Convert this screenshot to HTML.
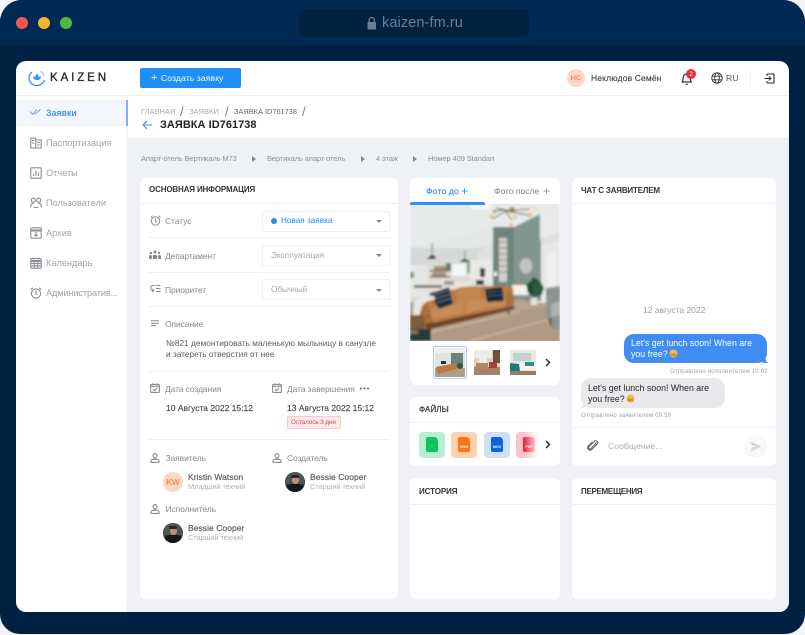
<!DOCTYPE html>
<html lang="ru"><head><meta charset="utf-8"><title>Kaizen</title>
<style>
*{box-sizing:border-box;margin:0;padding:0}
html,body{width:805px;height:635px;background:#f4f5f7;overflow:hidden;font-family:"Liberation Sans","Noto Sans CJK SC",sans-serif}
.a{position:absolute}
.t{position:absolute;white-space:nowrap;line-height:12px}
.card{position:absolute;background:#fff;border-radius:6px}
.line{position:absolute;height:1px;background:#eff0f3}
svg{position:absolute;overflow:visible}
.ic{fill:none;stroke:#8a8d93;stroke-width:1.1}
.nav{font-size:9.2px;color:#a0a3a9;letter-spacing:0}
.lab{font-size:8.5px;color:#85888e;letter-spacing:-.1px}
.sel{position:absolute;left:262px;width:128px;height:21px;border:1px solid #eeeff2;border-radius:2px;background:#fff}
.car{position:absolute;width:0;height:0;border-left:3px solid transparent;border-right:3px solid transparent;border-top:3px solid #85888e}
.head{font-size:8px;font-weight:bold;color:#33363b;letter-spacing:-.15px}
.crumb{font-size:7.5px;color:#8e9197;letter-spacing:-.1px}
.tri{position:absolute;width:0;height:0;border-top:3px solid transparent;border-bottom:3px solid transparent;border-left:4px solid #85888e}
.nm{font-size:8.5px;color:#5d6066;letter-spacing:.05px;font-weight:normal;-webkit-text-stroke:.2px #5d6066}
.rl{font-size:7.5px;color:#b0b2b7;letter-spacing:-.15px}
.ava{position:absolute;width:20px;height:20px;border-radius:50%;overflow:hidden;background:#34383b}
.file{position:absolute;top:432px;width:26px;height:26px;border-radius:4px}
.file i{position:absolute;left:7px;top:5px;width:12px;height:15px;border-radius:2px 4px 2px 2px;display:block}
.file b{position:absolute;left:0;width:26px;text-align:center;top:13px;font-size:3.5px;line-height:5px;color:#fff}
.sl{position:absolute;top:105px;font-size:13px;line-height:14px;color:#7c7f85}
</style></head><body>
<div class="a" style="left:0;top:0;width:805px;height:634px;background:#002142;border-radius:22px 22px 20px 20px;overflow:hidden">
  <div class="a" style="left:0;top:0;width:805px;height:45px;background:#002a54"></div>
</div>
<div class="a" style="left:16px;top:17px;width:12px;height:12px;border-radius:50%;background:#f0594f"></div>
<div class="a" style="left:38px;top:17px;width:12px;height:12px;border-radius:50%;background:#f7b52d"></div>
<div class="a" style="left:60px;top:17px;width:12px;height:12px;border-radius:50%;background:#4dbb3f"></div>
<div class="a" style="left:299px;top:9px;width:230px;height:28px;border-radius:6px;background:#00213f"></div>
<svg style="left:366px;top:16px" width="12" height="14" viewBox="0 0 12 14"><rect x="1.500" y="6" width="8.500" height="7.500" rx="1" fill="#6d7f92"/><path d="M3.300 6V4a2.500 2.500 0 0 1 5 0v2" fill="none" stroke="#6d7f92" stroke-width="1.300"/></svg>
<div class="t" style="left:382px;top:16px;font-size:14.5px;line-height:15px;color:#6d7f92;letter-spacing:.1px">kaizen-fm.ru</div>

<div class="a" style="left:16px;top:61px;width:773px;height:551px;background:#fff;border-radius:10px;overflow:hidden">
  <div class="a" style="left:112px;top:35px;width:661px;height:516px;background:#eff1f5"></div>
  <div class="a" style="left:112px;top:35px;width:661px;height:43px;background:#fff;border-bottom:1px solid #e8eaee"></div>
  <div class="a" style="left:0;top:34px;width:773px;height:1px;background:#eff0f3"></div>
  <div class="a" style="left:111px;top:35px;width:1px;height:516px;background:#f0f1f4"></div>
  <div class="a" style="left:0;top:39px;width:112px;height:26px;background:#f3f7fd;border-right:2px solid #7fb0ef"></div>
</div>

<!-- logo -->
<svg style="left:28px;top:69px" width="18" height="18" viewBox="0 0 18 18"><path d="M4 3A7.500 7.500 0 0 0 9 16.500a7.500 7.500 0 0 0 7.300-5.500" fill="none" stroke="#3d8ff0" stroke-width="1.300"/><path d="M12.500 2.500A7.500 7.500 0 0 1 16.300 7" fill="none" stroke="#a9cdf8" stroke-width="1.300"/><path d="M9 4.500c1.300 1.300 1.800 2.700 1.500 4l1.600-1.500.8 1c-.2 2-1.700 3-3.900 3s-3.700-1-3.900-3l.8-1 1.600 1.500C7.200 7.200 7.700 5.800 9 4.500z" fill="#3d8ff0"/></svg>
<div class="t" style="left:50px;top:71px;font-size:11.5px;line-height:15px;color:#26292e;letter-spacing:2.9px;font-weight:normal;-webkit-text-stroke:.35px #26292e">KAIZEN</div>

<!-- create -->
<div class="a" style="left:140px;top:68px;width:101px;height:20px;border-radius:2px;background:#1f8ff8"></div>
<div class="t" style="left:151px;top:72px;font-size:11px;color:#fff">+</div>
<div class="t" style="left:161px;top:72px;font-size:8.5px;color:#fff;letter-spacing:.15px">Создать заявку</div>

<!-- header right -->
<div class="a" style="left:567px;top:69px;width:18px;height:18px;border-radius:50%;background:#fdd8c2"></div>
<div class="t" style="left:567px;top:72px;width:18px;text-align:center;font-size:7.5px;color:#f4743b">НС</div>
<div class="t" style="left:591px;top:72px;color:#44474c;-webkit-text-stroke:.15px #44474c;font-size:8.5px;letter-spacing:.15px">Неклюдов Семён</div>
<svg style="left:680px;top:71px" width="14" height="15" viewBox="0 0 14 15"><path d="M2 11c1-1 1.200-2 1.200-4.300C3.200 4.300 4.800 3 6.700 3s3.500 1.300 3.500 3.700c0 2.300.2 3.300 1.300 4.300z" fill="none" stroke="#33363b" stroke-width="1.200" stroke-linejoin="round"/><path d="M5.500 12.800c.6.700 1.800.7 2.400 0" fill="none" stroke="#33363b" stroke-width="1.100"/></svg>
<div class="a" style="left:686px;top:69px;width:10px;height:10px;border-radius:50%;background:#f5263d"></div>
<div class="t" style="left:686px;top:68.5px;width:10px;text-align:center;font-size:6.5px;color:#fff">2</div>
<svg style="left:711px;top:72px" width="12" height="12" viewBox="0 0 12 12" fill="none" stroke="#2f3237" stroke-width=".9"><circle cx="6" cy="6" r="5.200"/><ellipse cx="6" cy="6" rx="2.300" ry="5.200"/><path d="M1 4.200h10M1 7.800h10"/></svg>
<div class="t" style="left:726px;top:72px;font-size:8.5px;color:#55585d;letter-spacing:.2px">RU</div>
<div class="a" style="left:750px;top:70px;width:1px;height:17px;background:#eff0f3"></div>
<svg style="left:764px;top:73px" width="11" height="11" viewBox="0 0 11 11" fill="none" stroke="#2a2d32" stroke-width="1.100"><path d="M3 1h7v9H3M3 3V1M3 10V8"/><path d="M.5 5.500h6M4.800 3.500l2 2-2 2"/></svg>

<!-- nav -->
<svg style="left:29px;top:107px" width="13" height="10" viewBox="0 0 13 10" fill="none" stroke="#6ba3ee" stroke-width="1"><path d="M1 4.500l2.500 3L8 2.500M5.500 7.500L11.500 2.500"/></svg>
<div class="t nav" style="left:46px;top:106.5px;color:#4b93f0;font-weight:bold;font-size:8.8px">Заявки</div>
<svg style="left:30px;top:137px" width="12" height="12" viewBox="0 0 12 12" class="ic"><path d="M.8 1h5v10h-5zM5.800 3h5.400v8H5.800zM2 3.500h2.500M2 6h2.500M7.200 5.500h2.600M7.200 8h2.600"/></svg>
<div class="t nav" style="left:46px;top:136.5px">Паспортизация</div>
<svg style="left:30px;top:167px" width="12" height="12" viewBox="0 0 12 12" class="ic"><rect x=".8" y=".8" width="10.400" height="10.400" rx="1"/><path d="M3.500 9V7M6 9V3.500M8.500 9V5.500"/></svg>
<div class="t nav" style="left:46px;top:166.5px">Отчеты</div>
<svg style="left:30px;top:197px" width="12" height="12" viewBox="0 0 12 12" class="ic"><circle cx="3.300" cy="3.200" r="2"/><circle cx="8.700" cy="3.200" r="2"/><path d="M.6 10.500c0-3 1.300-4.300 3-4.300M11.400 10.500c0-3-1.300-4.300-3-4.300M3.800 10.500h4.400"/></svg>
<div class="t nav" style="left:46px;top:196.5px">Пользователи</div>
<svg style="left:30px;top:227px" width="12" height="12" viewBox="0 0 12 12" class="ic"><rect x=".8" y=".8" width="10.400" height="10.400" rx="1"/><path d="M.8 3.500h10.400" stroke-width="2"/><path d="M6 5v4M4.300 7.500L6 9.200l1.700-1.700"/></svg>
<div class="t nav" style="left:46px;top:226.5px">Архив</div>
<svg style="left:30px;top:257px" width="12" height="12" viewBox="0 0 12 12" class="ic"><rect x=".8" y="1.500" width="10.400" height="9.700" rx="1"/><path d="M.8 4h10.400" stroke-width="2"/><path d="M3 .5v2M9 .5v2M.8 6.500h10.400M.8 8.800h10.400M4.200 5v6M7.800 5v6"/></svg>
<div class="t nav" style="left:46px;top:256.5px">Календарь</div>
<svg style="left:30px;top:287px" width="12" height="12" viewBox="0 0 12 12" class="ic"><circle cx="6" cy="6.500" r="4.600"/><path d="M6 3.800v2.900l1.800 1M.7 2.800L2.800.8M11.300 2.800L9.200.8"/></svg>
<div class="t nav" style="left:46px;top:286.5px;letter-spacing:-.12px">Административ...</div>

<!-- breadcrumbs -->
<div class="t" style="left:141px;top:106px;font-size:7.5px;color:#a5a8ad">ГЛАВНАЯ</div>
<div class="sl" style="left:180px">/</div>
<div class="t" style="left:189px;top:106px;font-size:7.5px;color:#a5a8ad">ЗАЯВКИ</div>
<div class="sl" style="left:225px">/</div>
<div class="t" style="left:234px;top:106px;font-size:7.4px;color:#63666c">ЗАЯВКА ID761738</div>
<div class="sl" style="left:302px">/</div>
<svg style="left:142px;top:120px" width="11" height="10" viewBox="0 0 11 10" fill="none" stroke="#2e92f5" stroke-width="1.100"><path d="M10 5H1M5 1L1 5l4 4"/></svg>
<div class="t" style="left:160px;top:119px;font-size:11px;font-weight:bold;color:#1e2126;letter-spacing:.03px">ЗАЯВКА ID761738</div>

<!-- path -->
<div class="t crumb" style="left:141px;top:153px">Апарт-отель Вертикаль М73</div>
<div class="tri" style="left:252px;top:156px"></div>
<div class="t crumb" style="left:267px;top:153px">Вертикаль апарт отель</div>
<div class="tri" style="left:361px;top:156px"></div>
<div class="t crumb" style="left:376px;top:153px">4 этаж</div>
<div class="tri" style="left:413px;top:156px"></div>
<div class="t crumb" style="left:428px;top:153px">Номер 409 Standart</div>

<!-- left card -->
<div class="card" style="left:140px;top:178px;width:258px;height:421px"></div>
<div class="t head" style="left:149px;top:184px">ОСНОВНАЯ ИНФОРМАЦИЯ</div>
<div class="line" style="left:140px;top:203px;width:258px"></div>
<svg style="left:150px;top:215px" width="11" height="11" viewBox="0 0 12 12" class="ic"><circle cx="6" cy="6.500" r="4.600"/><path d="M6 3.800v2.900l1.800 1M.7 2.800L2.800.8M11.300 2.800L9.200.8"/></svg>
<div class="t lab" style="left:165px;top:215px">Статус</div>
<div class="sel" style="top:211px"></div>
<div class="a" style="left:271px;top:218px;width:6px;height:6px;border-radius:50%;background:#1f8ff8"></div>
<div class="t" style="left:281px;top:215px;font-size:8.2px;color:#1f8ff8">Новая заявка</div>
<div class="car" style="left:376px;top:220px"></div>
<div class="line" style="left:149px;top:237px;width:241px"></div>
<svg style="left:149px;top:250px" width="12" height="10" viewBox="0 0 12 10" fill="#85888e"><circle cx="6" cy="2" r="1.500"/><circle cx="2" cy="3" r="1.200"/><circle cx="10" cy="3" r="1.200"/><path d="M3.800 9V5.500q2.200-1.500 4.400 0V9zM0 9V5.800q1.200-1 2.800-.5V9zM9.200 9V5.300q1.600-.5 2.800.5V9z"/></svg>
<div class="t lab" style="left:165px;top:249.5px">Департамент</div>
<div class="sel" style="top:245px"></div>
<div class="t" style="left:271px;top:249.5px;font-size:8.2px;color:#a5a8ad">Эксплуатация</div>
<div class="car" style="left:376px;top:254px"></div>
<div class="line" style="left:149px;top:272px;width:241px"></div>
<svg style="left:150px;top:284px" width="11" height="10" viewBox="0 0 11 10" fill="none" stroke="#85888e" stroke-width="1"><path d="M4.500 1.500H2.800a2 2 0 0 0-2 2v1a2 2 0 0 0 2 2h1.700M3.300 5l-1.300 1.500L3.300 8M6 1.500h4.500M6 4.500h4.500M6 7.500h4.500"/></svg>
<div class="t lab" style="left:165px;top:284px">Приоритет</div>
<div class="sel" style="top:279px"></div>
<div class="t" style="left:271px;top:284px;font-size:8.2px;color:#a5a8ad">Обычный</div>
<div class="car" style="left:376px;top:289px"></div>
<div class="line" style="left:149px;top:306px;width:241px"></div>
<svg style="left:151px;top:320px" width="9" height="8" viewBox="0 0 9 8" stroke="#85888e" stroke-width="1"><path d="M0 .8h8M0 3.200h8M0 5.600h5"/></svg>
<div class="t lab" style="left:165px;top:318px">Описание</div>
<div class="t" style="left:166px;top:337px;font-size:8.3px;color:#5b5e64">№821 демонтировать маленькую мыльницу в санузле</div>
<div class="t" style="left:166px;top:348px;font-size:8.3px;color:#5b5e64">и затереть отверстия от нее</div>
<div class="line" style="left:149px;top:371px;width:241px"></div>

<svg style="left:150px;top:383px" width="10" height="10" viewBox="0 0 10 10" class="ic"><rect x=".6" y="1.400" width="8.800" height="8" rx=".8"/><path d="M.6 3.300h8.800M2.800.2v2M7.200.2v2M3 6.300l1.500 1.400L7 5"/></svg>
<div class="t lab" style="left:165px;top:382.5px">Дата создания</div>
<div class="t" style="left:166px;top:402px;font-size:8.5px;color:#45484d;-webkit-text-stroke:.15px #45484d">10 Августа 2022 15:12</div>
<svg style="left:272px;top:383px" width="10" height="10" viewBox="0 0 10 10" class="ic"><rect x=".6" y="1.400" width="8.800" height="8" rx=".8"/><path d="M.6 3.300h8.800M2.800.2v2M7.200.2v2M3 6.300l1.500 1.400L7 5"/></svg>
<div class="t lab" style="left:287px;top:382.5px">Дата завершения</div>
<svg style="left:360px;top:387px" width="9" height="3" viewBox="0 0 9 3" fill="#63666c"><circle cx="1" cy="1.500" r="1"/><circle cx="4.500" cy="1.500" r="1"/><circle cx="8" cy="1.500" r="1"/></svg>
<div class="t" style="left:287px;top:402px;font-size:8.5px;color:#45484d;-webkit-text-stroke:.15px #45484d">13 Августа 2022 15:12</div>
<div class="a" style="left:287px;top:416px;width:54px;height:13px;background:#fde9ea;border:1px solid #fbc9cd;border-radius:2px"></div>
<div class="t" style="left:291px;top:416.5px;font-size:6.2px;color:#ee3b4a">Осталось 3 дня</div>
<div class="line" style="left:149px;top:439px;width:241px"></div>

<svg style="left:150px;top:453px" width="10" height="10" viewBox="0 0 10 10" class="ic"><circle cx="5" cy="2.600" r="2"/><path d="M3.500 5.800h3M1 9.400h8V8q0-1.500-2-1.500H3Q1 6.500 1 8z"/></svg>
<div class="t lab" style="left:165.5px;top:451.5px">Заявитель</div>
<svg style="left:272px;top:453px" width="10" height="10" viewBox="0 0 10 10" class="ic"><circle cx="5" cy="2.600" r="2"/><path d="M3.500 5.800h3M1 9.400h8V8q0-1.500-2-1.500H3Q1 6.500 1 8z"/></svg>
<div class="t lab" style="left:287px;top:451.5px">Создатель</div>
<div class="a" style="left:163px;top:472px;width:20px;height:20px;border-radius:50%;background:#fdd8c2"></div>
<div class="t" style="left:163px;top:476px;width:20px;text-align:center;font-size:8.5px;color:#f4743b">KW</div>
<div class="t nm" style="left:188px;top:470.5px">Kristin Watson</div>
<div class="t rl" style="left:188px;top:480.5px">Младший техний</div>
<div class="ava" style="left:285px;top:472px"><div class="a" style="left:0;top:0;width:20px;height:12px;background:#4c5654"></div><div class="a" style="left:6.5px;top:3.5px;width:7px;height:8.5px;border-radius:50%;background:#b8917f"></div><div class="a" style="left:6px;top:2.5px;width:8px;height:3px;border-radius:3px;background:#2a2523"></div><div class="a" style="left:1px;top:12px;width:18px;height:10px;border-radius:5px;background:#17181a"></div></div>
<div class="t nm" style="left:310px;top:470.5px">Bessie Cooper</div>
<div class="t rl" style="left:310px;top:480.5px">Старший техний</div>
<svg style="left:150px;top:504px" width="10" height="10" viewBox="0 0 10 10" class="ic"><circle cx="5" cy="2.600" r="2"/><path d="M3.500 5.800h3M1 9.400h8V8q0-1.500-2-1.500H3Q1 6.500 1 8z"/></svg>
<div class="t lab" style="left:165.5px;top:502.5px">Исполнитель</div>
<div class="ava" style="left:163px;top:523px"><div class="a" style="left:0;top:0;width:20px;height:12px;background:#4c5654"></div><div class="a" style="left:6.5px;top:3.5px;width:7px;height:8.5px;border-radius:50%;background:#b8917f"></div><div class="a" style="left:6px;top:2.5px;width:8px;height:3px;border-radius:3px;background:#2a2523"></div><div class="a" style="left:1px;top:12px;width:18px;height:10px;border-radius:5px;background:#17181a"></div></div>
<div class="t nm" style="left:188px;top:521.700px">Bessie Cooper</div>
<div class="t rl" style="left:188px;top:531.700px">Старший техний</div>

<!-- photo card -->
<div class="card" style="left:410px;top:178px;width:150px;height:207px"></div>
<div class="t" style="left:426px;top:185px;font-size:8.5px;color:#2e92f5;letter-spacing:.2px;-webkit-text-stroke:.15px #2e92f5">Фото до</div>
<div class="t" style="left:461px;top:184.5px;font-size:12px;color:#2e92f5">+</div>
<div class="t" style="left:494px;top:185px;font-size:8.5px;color:#8f9298;-webkit-text-stroke:.1px #8f9298">Фото после</div>
<div class="t" style="left:543px;top:184.5px;font-size:12px;color:#8f9298">+</div>

<svg style="left:410px;top:204px" width="150" height="137" viewBox="0 4 150 137" preserveAspectRatio="none">
  <defs><clipPath id="ph"><rect x="0" y="4" width="150" height="137"/></clipPath><filter id="bl" x="-5%" y="-5%" width="110%" height="110%"><feGaussianBlur stdDeviation="1"/></filter></defs>
  <g clip-path="url(#ph)"><g filter="url(#bl)">
  <rect x="0" y="0" width="150" height="145" fill="#e9ebea"/>
  <path d="M0 4H150V20L83 50 70 36 0 47z" fill="#e8eae9"/>
  <path d="M0 47L83 27V50L0 47z" fill="#e4e6e5"/>
  <path d="M60 4h22l-3 5H62z" fill="#fbfcfb"/>
  <path d="M0 47h83v60H0z" fill="#d6d9d8"/>
  <path d="M0 48q35-14 70-6v6z" fill="#e3e6e5"/>
  <path d="M68 52L83 41V95H68z" fill="#dfe2e1"/>
  <path d="M0 65h18v32H0z" fill="#e4e6e5"/>
  <path d="M18 65h50v16H18z" fill="#dcd9d2"/>
  <rect x="20" y="70" width="20" height="1.500" fill="#7c6248"/>
  <rect x="20" y="76" width="20" height="1.500" fill="#7c6248"/>
  <rect x="24" y="66" width="12" height="4" fill="#a88c70"/>
  <rect x="22" y="72" width="14" height="4" fill="#a38f7b"/>
  <rect x="36" y="63" width="5" height="7" fill="#5f8068"/>
  <rect x="42" y="64" width="14" height="12" fill="#f4f7f6"/>
  <rect x="57" y="60" width="3" height="13" fill="#84a68e"/>
  <rect x="60" y="60" width="22" height="20" fill="#e9e9e6"/>
  <rect x="70" y="68" width="5" height="9" fill="#3f4446"/>
  <path d="M18 81h62v16H18z" fill="#e8e3db"/>
  <rect x="34" y="81" width="10" height="4" fill="#a09b93"/>
  <rect x="66" y="80" width="8" height="5" fill="#3a3d40"/>
  <rect x="4" y="85" width="28" height="3" fill="#77797b"/>
  <path d="M83 27h21v73H83z" fill="#71837e"/>
  <path d="M104 27l28-14v88h-28z" fill="#819591"/>
  <path d="M130 14l20-8v26l-20 8z" fill="#e9ebea"/>
  <path d="M131 38l19-7v71h-19z" fill="#dfe1e0"/>
  <path d="M131 46l19-5v65h-19z" fill="#e6e7e6"/>
  <rect x="137" y="52" width="9" height="42" fill="#eeefee"/>
  <rect x="89" y="38" width="8" height="44" fill="#cfd0cb"/>
  <path d="M89 42h8M89 48h8M89 54h8M89 60h8M89 66h8M89 72h8" stroke="#8f8f88" stroke-width=".9"/>
  <ellipse cx="116" cy="66" rx="6.500" ry="8" fill="#bfc4c0" stroke="#a89a82" stroke-width="1"/>
  <rect x="84" y="72" width="3" height="4" fill="#f3f3f2"/>
  <path d="M0 102L95 98 150 105V145H0z" fill="#b8a48e"/>
  <path d="M30 122L150 105v36H20z" fill="#b09a84"/>
  <path d="M20 132l90-20" stroke="#cab8a4" stroke-width="1.500"/>
  <path d="M60 141l88-24" stroke="#c8b7a2" stroke-width="1.500"/>
  <path d="M86 8L100 11M97 11L120 9M96 11L118 15M96 12L102 20M96 11l-14 8M95 10L82 11" stroke="#4f4a3f" stroke-width=".9"/>
  <circle cx="102" cy="10" r="3" fill="#9b8350"/>
  <circle cx="124" cy="9" r="2" fill="#f3d9ad"/><circle cx="120" cy="15" r="2" fill="#e8b57a"/><circle cx="101" cy="25" r="1.800" fill="#f0b27a"/><circle cx="105" cy="17" r="1.500" fill="#d9b077"/><circle cx="81" cy="16" r="2" fill="#e8c190"/><circle cx="85" cy="12" r="1.500" fill="#c39d6a"/>
  <path d="M22 43v13M55 50v11" stroke="#3a3f42" stroke-width=".7"/>
  <path d="M17 59q4-6 8-3l1 3z M50 62q3-5 8-2l1 2z" fill="#3b4447"/>
  <rect x="102" y="85" width="17" height="10" fill="#f1f0ec"/>
  <path d="M104 95v7M117 95v7" stroke="#9a6b43" stroke-width="1"/>
  <rect x="106" y="81" width="6" height="4" fill="#a28d75"/>
  <path d="M124 78l6 3 4 7-3 8-8 1-6-6 1-8z" fill="#2f5a3c"/>
  <path d="M116 84l6-2 2 10-5 3zM122 78l3-1 2 5-4 2z" fill="#1f4a30"/>
  <rect x="121" y="98" width="6" height="7" fill="#e4e2dc"/>
  <path d="M136 88l14-2v43h-8l-6-12z" fill="#8e9293"/>
  <path d="M141 104l9-3v14l-9 2z" fill="#adb1b2"/>
  <path d="M140 118l1 7" stroke="#3a2f2a" stroke-width="1.500"/>
  <path d="M16 100l5-8 18-2 35-4h22l7 2 1 17-4 3-84 15-4 2z" fill="#b97b4a"/>
  <path d="M47 88q10-2 21-2l2 1 1 13-24 3z" fill="#c4864f"/>
  <path d="M22 108l31-6 2 11-33 6z M55 102l23-4 3 9-25 6z M80 98l19-2 1 9-19 2z" fill="#c78c58"/>
  <path d="M7 101q5-3 9 0l7 21-2 10-13 2z" fill="#ac6e3f"/>
  <path d="M96 92l6-1 1 15-3 5-4-3z" fill="#a96d40"/>
  <path d="M15 124l89-18 1 3-88 21z" fill="#6f4526"/>
  <path d="M20 131l-1 6M98 110l1 5" stroke="#5b3a20" stroke-width="1.500"/>
  <path d="M19 94l20-7 4 17-14 5z" fill="#1f2b3a"/>
  <path d="M23 95l16-5M24 99l17-5M26 103l16-5" stroke="#7b8796" stroke-width=".7"/>
  <path d="M75 89l17-2 2 14-17 1z" fill="#16283b"/>
  <path d="M78 92l13-1M78 96l14-1" stroke="#75869b" stroke-width=".7" stroke-dasharray="1.500 1"/>
  <path d="M4 102q8-8 20-6l1 4q-9 0-13 6l-4 14-5-2z" fill="#e9e6df"/>
  <path d="M0 115h14l1 14H0z" fill="#7c5a3c"/><path d="M0 129l20-14" stroke="#8a603b" stroke-width="1.500"/>
  <rect x="0" y="129" width="21" height="12" fill="#243c38"/>
  <rect x="0" y="130" width="8" height="4" fill="#8a6f55"/>
  <rect x="0" y="72" width="4" height="6" fill="#7d9b83"/>
  </g></g>
</svg>
<div class="a" style="left:410px;top:202px;width:75px;height:2.500px;background:#2e92f5;border-radius:2px 2px 0 0"></div>

<!-- thumbs -->
<div class="a" style="left:433px;top:346px;width:34px;height:33px;border:1px solid #a9cdf8;border-radius:2px;background:#fff"></div>
<svg style="left:435px;top:348px" width="30" height="29" viewBox="0 0 30 29"><rect width="30" height="29" fill="#dfe4e3"/><rect x="16" y="5" width="12" height="16" fill="#6d807c"/><rect y="0" width="30" height="5" fill="#edefee"/><rect y="20" width="30" height="9" fill="#b09d88"/><path d="M1 19l20-4 1 6-19 5z" fill="#b97a48"/><circle cx="25" cy="18" r="3" fill="#2f5a3c"/><rect x="6" y="13" width="5" height="3" fill="#22303f"/></svg>
<svg style="left:474px;top:350px" width="26" height="25" viewBox="0 0 26 25"><rect width="26" height="25" fill="#dcd3c8"/><rect x="19" y="0" width="7" height="13" fill="#6e5040"/><rect x="0" y="0" width="18" height="8" fill="#eeeae4"/><rect x="5" y="5" width="8" height="8" fill="#f1ebe4"/><rect y="17" width="26" height="8" fill="#a18468"/><rect x="2" y="13" width="12" height="6" fill="#b08865"/><rect x="15" y="12" width="8" height="6" fill="#a83d3a"/></svg>
<svg style="left:510px;top:350px" width="26" height="25" viewBox="0 0 26 25"><rect width="26" height="25" fill="#ebe7df"/><rect x="3" y="3" width="18" height="8" fill="#c2d2d2"/><rect y="13" width="26" height="7" fill="#f4f3ef"/><path d="M0 13l9 1 1 7H0z" fill="#1e7b72"/><rect x="15" y="12" width="9" height="4" fill="#2a8f87"/><rect y="21" width="26" height="4" fill="#9c7c5f"/></svg>
<svg style="left:545px;top:358px" width="6" height="9" viewBox="0 0 6 9" fill="none" stroke="#23262b" stroke-width="1.400"><path d="M1 1l3.500 3.500L1 8"/></svg>

<!-- files -->
<div class="card" style="left:410px;top:397px;width:150px;height:69px"></div>
<div class="t head" style="left:419px;top:404px;font-weight:normal;-webkit-text-stroke:.2px #33363b;letter-spacing:.1px">ФАЙЛЫ</div>
<div class="line" style="left:410px;top:422px;width:150px"></div>
<div class="file" style="left:419px;background:#b9efd0"><i style="background:#0fc165"></i><b style="top:12px">▪</b></div>
<div class="file" style="left:451px;background:#ffd1af"><i style="background:#fb7514"></i><b>SWG</b></div>
<div class="file" style="left:484px;background:#cde0f9"><i style="background:#0e63dc"></i><b>MOV</b></div>
<div class="file" style="left:516px;background:#fbc4c9"><i style="background:#ef233f"></i><b>PDF</b></div>
<div class="a" style="left:524px;top:431px;width:18px;height:28px;background:linear-gradient(90deg,rgba(255,255,255,0),#fff 85%)"></div>
<svg style="left:545px;top:440px" width="6" height="9" viewBox="0 0 6 9" fill="none" stroke="#23262b" stroke-width="1.400"><path d="M1 1l3.500 3.500L1 8"/></svg>

<!-- history -->
<div class="card" style="left:410px;top:478px;width:150px;height:121px"></div>
<div class="t head" style="left:419px;top:485.5px;letter-spacing:-.1px">ИСТОРИЯ</div>
<div class="line" style="left:410px;top:504px;width:150px"></div>

<!-- chat -->
<div class="card" style="left:572px;top:178px;width:204px;height:288px"></div>
<div class="t head" style="left:581px;top:185px;letter-spacing:-.2px">ЧАТ С ЗАЯВИТЕЛЕМ</div>
<div class="line" style="left:572px;top:203px;width:204px"></div>
<div class="t" style="left:643px;top:303.5px;font-size:8.5px;color:#9a9da2">12 августа 2022</div>
<div class="a" style="left:624px;top:334px;width:143px;height:29px;border-radius:10px;background:#3f8cf2"></div>
<svg style="left:760px;top:356px" width="10" height="8" viewBox="0 0 10 8"><path d="M1 0l4 0 1 5q1 1.500 3 2-5 .5-8-1z" fill="#3f8cf2"/></svg>
<div class="t" style="left:631px;top:337px;font-size:8.8px;color:#fff">Let's get lunch soon! When are</div>
<div class="t" style="left:631px;top:348px;font-size:8.8px;color:#fff">you free?</div>
<svg style="left:669px;top:349px" width="9" height="9" viewBox="0 0 9 9"><circle cx="4.500" cy="4.500" r="4" fill="#f3bd4e"/><rect x="1.500" y="4.500" width="6" height="3" rx="1" fill="#e58a35"/></svg>
<div class="t" style="left:670px;top:365.5px;font-size:6px;color:#9fa2a7;letter-spacing:.2px">Отправлено исполнителем 10:02</div>
<div class="a" style="left:581px;top:378px;width:144px;height:30px;border-radius:10px;background:#e9e9eb"></div>
<svg style="left:579px;top:400px" width="10" height="8" viewBox="0 0 10 8"><path d="M9 0L5 0 4 5Q3 6.500 1 7.500 6 8 9 6z" fill="#e9e9eb"/></svg>
<div class="t" style="left:588px;top:381.5px;font-size:8.8px;color:#25282d">Let's get lunch soon! When are</div>
<div class="t" style="left:588px;top:392.5px;font-size:8.8px;color:#25282d">you free?</div>
<svg style="left:626px;top:393.5px" width="9" height="9" viewBox="0 0 9 9"><circle cx="4.500" cy="4.500" r="4" fill="#f3bd4e"/><rect x="1.500" y="4.500" width="6" height="3" rx="1" fill="#e58a35"/></svg>
<div class="t" style="left:581px;top:409.5px;font-size:6px;color:#9fa2a7;letter-spacing:.2px">Отправлено заявителем 09:59</div>
<div class="line" style="left:572px;top:427px;width:204px"></div>
<svg style="left:587px;top:440px" width="11" height="11" viewBox="0 0 11 11" fill="none" stroke="#5d6066" stroke-width="1"><path d="M9.500 2.500L4 8.500a1.300 1.300 0 0 1-2-1.800l5.500-5.500a2 2 0 0 1 2.800 2.800L4.500 9.800A2.600 2.600 0 0 1 1 6.200L5.500 1.800"/></svg>
<div class="t" style="left:608px;top:440px;font-size:8.7px;color:#a8abb0">Сообщение...</div>
<div class="a" style="left:744px;top:435px;width:23px;height:23px;border-radius:50%;background:#f8f8f9"></div>
<svg style="left:750px;top:441px" width="12" height="11" viewBox="0 0 12 11"><path d="M.5.500L11.500 5.500.5 10.500l1.500-4 5-1-5-1z" fill="#d5d6d9"/></svg>

<!-- moves -->
<div class="card" style="left:572px;top:478px;width:204px;height:121px"></div>
<div class="t head" style="left:581px;top:485.5px;letter-spacing:-.3px">ПЕРЕМЕЩЕНИЯ</div>
<div class="line" style="left:572px;top:504px;width:204px"></div>
</body></html>
